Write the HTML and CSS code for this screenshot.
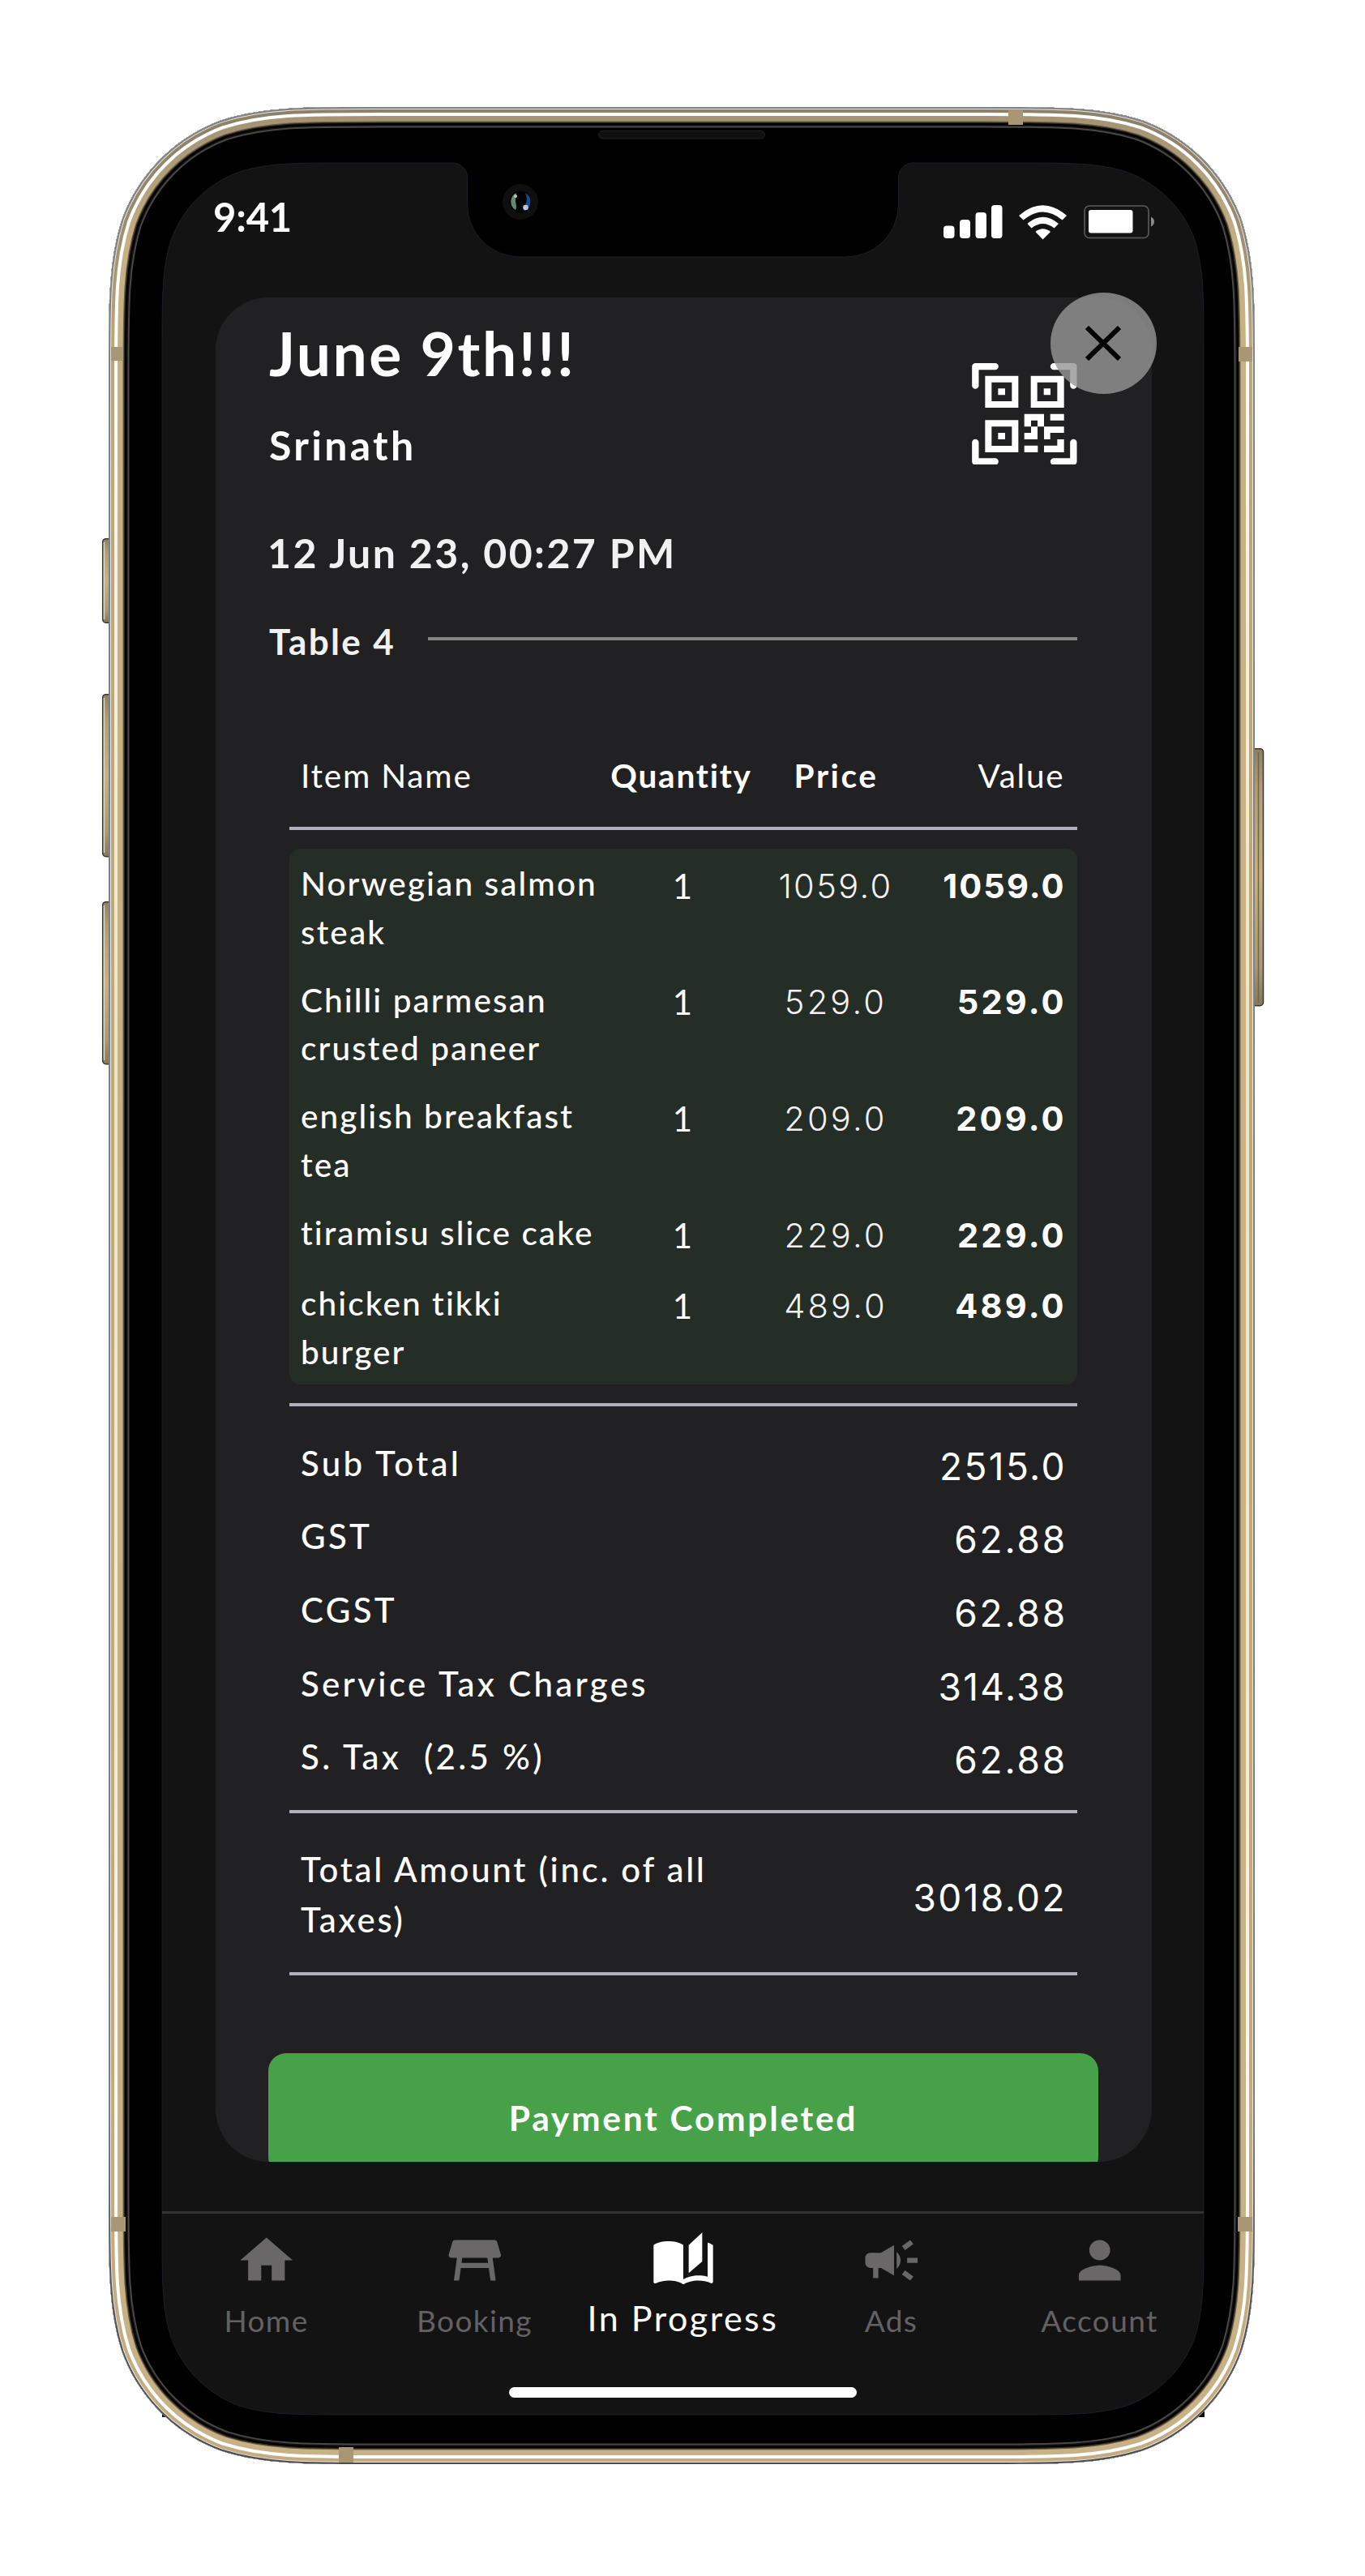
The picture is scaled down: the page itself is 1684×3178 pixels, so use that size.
FILE: index.html
```html
<!DOCTYPE html>
<html lang="en">
<head>
<meta charset="utf-8">
<title>In Progress order</title>
<link rel="stylesheet" href="styles.css">
</head>
<body>
<div class="stage">
  <svg class="device" viewBox="0 0 1684 3178" width="1684" height="3178" aria-hidden="true">
    <defs>
      <path id="body" d="M0 336.3C0 239.5 0 191 16.5 138.9C37.2 82 82 37.2 138.9 16.5C191 0 239.5 0 336.3 0H1077.7C1174.5 0 1223 0 1275.1 16.5C1332 37.2 1376.8 82 1397.5 138.9C1414 191 1414 239.5 1414 336.3V2571.7C1414 2668.5 1414 2717 1397.5 2769.1C1376.8 2826 1332 2870.8 1275.1 2891.5C1223 2908 1174.5 2908 1077.7 2908H336.3C239.5 2908 191 2908 138.9 2891.5C82 2870.8 37.2 2826 16.5 2769.1C0 2717 0 2668.5 0 2571.7Z"/>
      <clipPath id="bodyClip"><use href="#body"/></clipPath>
      <linearGradient id="shine" x1="0" y1="0" x2="0" y2="1">
        <stop offset="0" stop-color="#fff"/><stop offset=".12" stop-color="#fffdf8"/><stop offset=".2" stop-color="#f8f1e2"/><stop offset=".4" stop-color="#efe4bf"/><stop offset=".7" stop-color="#f4ead0"/><stop offset=".88" stop-color="#fffdf8"/><stop offset="1" stop-color="#fff"/>
      </linearGradient>
      <linearGradient id="gold" x1="0" y1="0" x2="0" y2="1">
        <stop offset="0" stop-color="#a39273"/><stop offset=".02" stop-color="#ab9a79"/><stop offset=".06" stop-color="#c7b084"/><stop offset="1" stop-color="#c8b186"/>
      </linearGradient>
      <linearGradient id="goldOuter" x1="0" y1="0" x2="0" y2="1">
        <stop offset="0" stop-color="#8c8068"/><stop offset=".04" stop-color="#97886c"/><stop offset=".1" stop-color="#bca67c"/><stop offset="1" stop-color="#c4ac80"/>
      </linearGradient>
      <linearGradient id="rim" x1="0" y1="0" x2="0" y2="1">
        <stop offset="0" stop-color="#808386"/><stop offset=".85" stop-color="#7c7d81"/><stop offset=".93" stop-color="#55565a"/><stop offset="1" stop-color="#4c4d50"/>
      </linearGradient>
      <linearGradient id="key" x1="0" y1="0" x2="0" y2="1">
        <stop offset="0" stop-color="#8d8068"/><stop offset=".15" stop-color="#b09d78"/><stop offset=".5" stop-color="#c9b184"/><stop offset=".85" stop-color="#a9987a"/><stop offset="1" stop-color="#84775c"/>
      </linearGradient>
    </defs>

    <g stroke="#3c372b" stroke-width="1.5" fill="url(#key)">
      <rect x="126.7" y="664.7" width="14" height="103.5" rx="4"/>
      <rect x="126.7" y="856.7" width="14" height="200" rx="4"/>
      <rect x="126.7" y="1112.7" width="14" height="200" rx="4"/>
      <rect x="1541" y="923.7" width="17.5" height="317" rx="4"/>
    </g>
    <path d="M128.5 669V764M128.5 861V1052M128.5 1117V1308" stroke="#ddd6c2" stroke-width="1.5"/>
    <path d="M1552.5 928V1237" stroke="#6f654e" stroke-width="1.5"/>
    <path d="M200 2900H1486V2982H200Z" fill="#000"/>

    <g transform="translate(134 132)">
      <use href="#body" fill="#000"/>
      <g clip-path="url(#bodyClip)" fill="none">
        <use href="#body" stroke="#48484a" stroke-width="51"/>
        <use href="#body" stroke="#14110c" stroke-width="47"/>
        <use href="#body" stroke="#000" stroke-width="44"/>
        <use href="#body" stroke="#2a241a" stroke-width="40"/>
        <use href="#body" stroke="#6d6049" stroke-width="37.5"/>
        <use href="#body" stroke="url(#gold)" stroke-width="35"/>
        <use href="#body" stroke="url(#shine)" stroke-width="22"/>
        <use href="#body" stroke="url(#goldOuter)" stroke-width="14"/>
        <use href="#body" stroke="#e6e6e2" stroke-width="6"/>
        <use href="#body" stroke="url(#rim)" stroke-width="4"/>
      </g>
      <path fill="#131313" stroke="#1d1e2a" stroke-width="1" d="M66 298.3C66 232.3 66 199.3 77.2 163.7C91.4 124.9 121.9 94.4 160.7 80.2C196.3 69 229.3 69 295.3 69H424.5a18 18 0 0 1 18 18V120a65 65 0 0 0 65 65H909.5a65 65 0 0 0 65-65V87a18 18 0 0 1 18-18H1121.7C1187.7 69 1220.7 69 1256.3 80.2C1295.1 94.4 1325.6 124.9 1339.8 163.7C1351 199.3 1351 232.3 1351 298.3V2617.7C1351 2683.7 1351 2716.7 1339.8 2752.3C1325.6 2791.1 1295.1 2821.6 1256.3 2835.8C1220.7 2847 1187.7 2847 1121.7 2847H295.3C229.3 2847 196.3 2847 160.7 2835.8C121.9 2821.6 91.4 2791.1 77.2 2752.3C66 2716.7 66 2683.7 66 2617.7Z"/>
    </g>

    <g fill="#a99674">
      <rect x="137" y="428" width="15" height="17"/>
      <rect x="1528" y="428" width="17" height="18"/>
      <rect x="1244" y="136" width="18" height="18"/>
      <rect x="137" y="2735" width="18" height="18"/>
      <rect x="1527" y="2735" width="18" height="18"/>
      <rect x="418" y="3019" width="18" height="19"/>
    </g>

    <rect x="738.5" y="161.5" width="205" height="9.5" rx="4.7" fill="#101010" stroke="#232323"/>
    <circle cx="642" cy="249" r="22" fill="#0f0f0f"/>
    <circle cx="642" cy="249" r="13.5" fill="#020202"/>
    <path d="M637 238a12 12 0 0 0-1 21q2-3 0-10 0-7 1-11z" fill="#5f8a73"/>
    <path d="M648 238a12.5 12.5 0 0 1 0 22q-3 0-1-5 5-8 1-17z" fill="#174a86"/>
    <circle cx="636" cy="242" r="2" fill="#b9c6c0"/>
    <circle cx="648.5" cy="256" r="3.3" fill="#c3c4dd"/>
  </svg>

  <main class="screen">
    <header class="status">
      <span class="clock">9:41</span>
      <svg class="status-icons" viewBox="1164 250 260 48" width="260" height="48" fill="#fff" aria-hidden="true">
        <rect x="1164" y="278.5" width="13.5" height="15.5" rx="4"/>
        <rect x="1184" y="271" width="13" height="23" rx="4"/>
        <rect x="1203.5" y="262" width="13.5" height="32" rx="4"/>
        <rect x="1223" y="253" width="13.5" height="41" rx="4"/>
        <path d="M1257 266Q1286.5 240.5 1316 266L1310.5 271.5Q1286.5 251.5 1262.5 271.5Z"/>
        <path d="M1267.5 276Q1286.5 259.5 1306 276L1300.5 281.5Q1286.5 270.5 1272.5 281.5Z"/>
        <path d="M1277.5 286Q1286.5 278.5 1296 286L1286.5 295.5Z"/>
        <rect x="1338" y="254" width="79" height="39.5" rx="6" fill="none" stroke="#5c5c5c" stroke-width="1.6"/>
        <rect x="1343" y="259" width="54.5" height="28.5" rx="3"/>
        <path d="M1420 267.5Q1424 269.5 1424 273.5T1420 279.5Z" fill="#8a8a8a"/>
      </svg>
    </header>

    <section class="card">
      <div class="card-head">
        <div>
          <h1 class="title">June 9th!!!</h1>
          <p class="guest">Srinath</p>
        </div>
        <svg class="qr" viewBox="177 322 389 377" width="129.7" height="125.7" fill="#fff" preserveAspectRatio="none" aria-hidden="true">
          <g fill="none" stroke="#fff" stroke-width="25" stroke-linecap="round" stroke-linejoin="round">
            <path d="M190 405V334.5H263M480 334.5H553V405M190 616V686.5H263M480 686.5H553V616"/>
          </g>
          <path fill-rule="evenodd" d="M226 369H349V487H226ZM250 393V463H325V393ZM395 369H518V487H395ZM419 393V463H493V393ZM226 533H349V652H226ZM250 557V628H325V557Z"/>
          <path d="M274 416H300V440H274ZM443 416H468V440H443ZM274 580H300V604H274Z"/>
          <path d="M371 510H444V557H420V534H396V557H371ZM467 510H518V534H467ZM396 557H420V604H371V580H396ZM444 557H518V580H467V604H444ZM371 627H421V652H371ZM493 604H518V652H444V627H493Z"/>
        </svg>
      </div>
      <p class="date">12 Jun 23, 00:27 PM</p>
      <div class="table-no"><span>Table 4</span><i class="line"></i></div>

      <div class="bill">
        <div class="row head">
          <span>Item Name</span><b class="center">Quantity</b><b class="center price-head">Price</b><span class="right">Value</span>
        </div>
        <hr>
        <div class="items">
          <div class="row"><span class="name">Norwegian salmon steak</span><span class="qty">1</span><span class="price">1059.0</span><b class="value">1059.0</b></div>
          <div class="row wide"><span class="name">Chilli parmesan crusted paneer</span><span class="qty">1</span><span class="price">529.0</span><b class="value">529.0</b></div>
          <div class="row wide"><span class="name">english breakfast tea</span><span class="qty">1</span><span class="price">209.0</span><b class="value">209.0</b></div>
          <div class="row wide single"><span class="name">tiramisu slice cake</span><span class="qty">1</span><span class="price">229.0</span><b class="value">229.0</b></div>
          <div class="row wide"><span class="name">chicken tikki<br>burger</span><span class="qty">1</span><span class="price">489.0</span><b class="value">489.0</b></div>
        </div>
        <hr>
        <div class="sums">
          <div class="sum"><span>Sub Total</span><span class="amount">2515.0</span></div>
          <div class="sum"><span>GST</span><span class="amount loose">62.88</span></div>
          <div class="sum"><span>CGST</span><span class="amount loose">62.88</span></div>
          <div class="sum"><span>Service Tax Charges</span><span class="amount">314.38</span></div>
          <div class="sum"><span>S. Tax&nbsp; (2.5 %)</span><span class="amount loose">62.88</span></div>
        </div>
        <hr>
        <div class="sum total"><span class="total-label">Total Amount (inc. of all Taxes)</span><span class="amount">3018.02</span></div>
        <hr>
      </div>
      <button class="pay" type="button">Payment Completed</button>
    </section>

    <button class="close" type="button" aria-label="Close">
      <svg viewBox="0 0 44 43" width="44" height="43" preserveAspectRatio="none"><path d="M2 2L42 41M42 2L2 41" stroke="#000" stroke-width="6"/></svg>
    </button>

    <nav class="tabs">
      <a class="tab"><svg viewBox="0 0 24 24" preserveAspectRatio="none"><path d="M10 20v-6h4v6h5v-8h3L12 3 2 12h3v8z"/></svg><span>Home</span></a>
      <a class="tab"><svg viewBox="0 0 24 24" preserveAspectRatio="none"><path d="M21.96 9.73l-1.43-5C20.41 4.3 20.02 4 19.57 4H4.43c-.45 0-.84.3-.96.73l-1.43 5c-.18.63.3 1.27.96 1.27h2.2L4 20h2l.67-5h10.67l.66 5h2l-1.2-9H21c.66 0 1.14-.64.96-1.27zM6.93 13l.27-2h9.6l.27 2H6.93z"/></svg><span>Booking</span></a>
      <a class="tab active"><svg viewBox="0 0 24 24" preserveAspectRatio="none"><path d="M19 1l-5 5v11l5-4.5V1zM1 6v14.65c0 .25.25.5.5.5.1 0 .15-.05.25-.05C3.1 20.45 5.05 20 6.5 20c1.95 0 4.05.4 5.5 1.5V6c-1.45-1.1-3.55-1.5-5.5-1.5S2.45 4.9 1 6zm22 13.5V6c-.6-.45-1.25-.75-2-1v13.5c-1.1-.35-2.3-.5-3.5-.5-1.7 0-4.15.65-5.5 1.5v2c1.35-.85 3.8-1.5 5.5-1.5 1.65 0 3.35.3 4.75 1.05.1.05.15.05.25.05.25 0 .5-.25.5-.5v-1.1z"/></svg><span>In Progress</span></a>
      <a class="tab"><svg viewBox="0 0 24 24" preserveAspectRatio="none"><path d="M18 11v2h4v-2h-4zM16 17.61c.96.71 2.21 1.65 3.2 2.39.4-.53.8-1.07 1.2-1.6-.99-.74-2.24-1.68-3.2-2.4-.4.54-.8 1.08-1.2 1.61zM20.4 5.6c-.4-.53-.8-1.07-1.2-1.6-.99.74-2.24 1.68-3.2 2.4.4.53.8 1.07 1.2 1.6.96-.72 2.21-1.65 3.2-2.4zM4 9c-1.1 0-2 .9-2 2v2c0 1.1.9 2 2 2h1v4h2v-4h1l5 3V6L8 9H4zM15.5 12c0-1.33-.58-2.53-1.5-3.35v6.69c.92-.81 1.5-2.01 1.5-3.34z"/></svg><span>Ads</span></a>
      <a class="tab"><svg viewBox="0 0 24 24" preserveAspectRatio="none"><path d="M12 12c2.21 0 4-1.79 4-4s-1.79-4-4-4-4 1.79-4 4 1.79 4 4 4zm0 2c-2.67 0-8 1.34-8 4v2h16v-2c0-2.66-5.33-4-8-4z"/></svg><span>Account</span></a>
    </nav>
    <div class="home-bar"></div>
  </main>
</div>
</body>
</html>
```
FILE: styles.css
```css
* { box-sizing: border-box; }
body { margin: 0; background: #fff; font-family: Lato, "Open Sans", sans-serif; color: #fff; }
h1, p { margin: 0; }

.stage { position: relative; width: 1684px; height: 3178px; padding: 201px 0 0 200px; }
.device { position: absolute; left: 0; top: 0; display: block; }
.screen { position: relative; width: 1285px; height: 2778px; display: flex; flex-direction: column; }

.status { height: 166px; flex: none; display: flex; justify-content: space-between; align-items: flex-start; padding: 36px 61px 0 63px; }
.clock { font-size: 49px; font-weight: 700; line-height: 60px; letter-spacing: -0.2px; }
.status-icons { display: block; margin-top: 13px; }

.card { flex: none; height: 2300px; margin: 0 64px 0 66px; padding: 23px 66px 0; background: #212123; border-radius: 65px; overflow: hidden; }
.card-head { display: flex; justify-content: space-between; align-items: flex-start; padding-right: 26px; }
.title { font-size: 75px; font-weight: 700; line-height: 90px; letter-spacing: 2.5px; }
.guest { margin-top: 38.5px; font-size: 50px; font-weight: 700; line-height: 60px; letter-spacing: 3.3px; }
.qr { display: block; margin-top: 57.5px; }
.date { margin: 73px 0 0 -2px; font-size: 50px; font-weight: 700; line-height: 60px; letter-spacing: 2.4px; color: #f1f1f1; }
.table-no { display: flex; justify-content: space-between; align-items: flex-start; margin-top: 53px; padding-right: 26px; font-size: 44px; font-weight: 700; line-height: 52px; letter-spacing: 2.4px; color: #f1f1f1; }
.line { width: 801px; height: 4px; margin-top: 21px; background: #868686; }

.bill { margin: 110px 26px 0 25px; font-size: 40.5px; }
.bill hr { height: 4px; margin: 0; border: 0; background: #b2afbc; }
.row { display: grid; grid-template-columns: 370px 193px 192px 1fr; padding: 0 16.5px 0 14px; }
.head { line-height: 60px; padding-bottom: 33px; letter-spacing: 1.8px; }
.center { text-align: center; }
.head .center { padding-left: 6px; }
.head .price-head { padding-left: 3px; letter-spacing: 2.6px; }
.right { text-align: right; margin-right: -1px; }
.items { margin: 23px 0 23px; height: 661px; padding-top: 13.5px; border-radius: 14px; background: #252d27; line-height: 59.5px; }
.items .row { height: 143.7px; }
.items .single { height: 87px; }
.name { font-weight: 500; letter-spacing: 2.1px; }
.qty, .price, .value { padding-top: 3.5px; font-family: Inter, Lato, sans-serif; font-size: 41.5px; }
.qty { text-align: center; padding-left: 9px; font-family: Lato, sans-serif; font-size: 42px; }
.price { text-align: center; font-weight: 300; letter-spacing: 2.4px; padding-left: 2px; color: #f1f1f1; }
.value { text-align: right; font-weight: 700; letter-spacing: 2.1px; margin-right: -2.1px; }
.wide .price { letter-spacing: 3.2px; }
.wide .value { letter-spacing: 3.2px; margin-right: -3.2px; }

.sums { padding: 40px 0 5px; }
.sum { display: flex; justify-content: space-between; height: 90.7px; padding: 0 14px; font-size: 42px; font-weight: 500; line-height: 60px; letter-spacing: 3.3px; }
.amount { padding-top: 4px; font-family: Inter, Lato, sans-serif; font-size: 46px; font-weight: 400; letter-spacing: 2.4px; margin-right: -1px; }
.loose { letter-spacing: 2.8px; margin-right: -2px; }
.total { height: 196px; padding-top: 38px; line-height: 62.3px; letter-spacing: 2.7px; }
.total-label { width: 560px; }
.total .amount { padding-top: 35px; }

.pay { width: 1024px; height: 150px; margin: 96.5px 0 0 -1px; padding: 50px 0 0; border: 0; border-radius: 22px; background: #46a148; color: #fff; font: 700 42.5px/60px Lato, "Open Sans", sans-serif; letter-spacing: 2.7px; display: flex; justify-content: center; align-items: flex-start; }

.close { position: absolute; left: 1095.5px; top: 160px; width: 131.5px; height: 125px; padding: 0; border: 0; border-radius: 50%; background: rgba(150, 150, 150, .806); display: flex; align-items: center; justify-content: center; }

.tabs { flex: none; display: flex; height: 175px; margin-top: 61px; border-top: 3px solid #343436; padding-top: 20px; color: #636163; }
.tab { flex: 1; display: flex; flex-direction: column; align-items: center; gap: 14.5px; font-size: 37px; line-height: 44px; letter-spacing: 1.4px; }
.tab svg { width: 77.5px; height: 75px; fill: #6a6769; }
.tab.active { color: #fff; gap: 12px; font-size: 43px; font-weight: 400; letter-spacing: 2.5px; }
.tab.active svg { width: 80px; fill: #fff; }
.tab span { white-space: nowrap; }
.home-bar { flex: none; width: 429px; height: 13px; margin: 41.5px 0 0 428px; border-radius: 6.5px; background: #fff; }
```
